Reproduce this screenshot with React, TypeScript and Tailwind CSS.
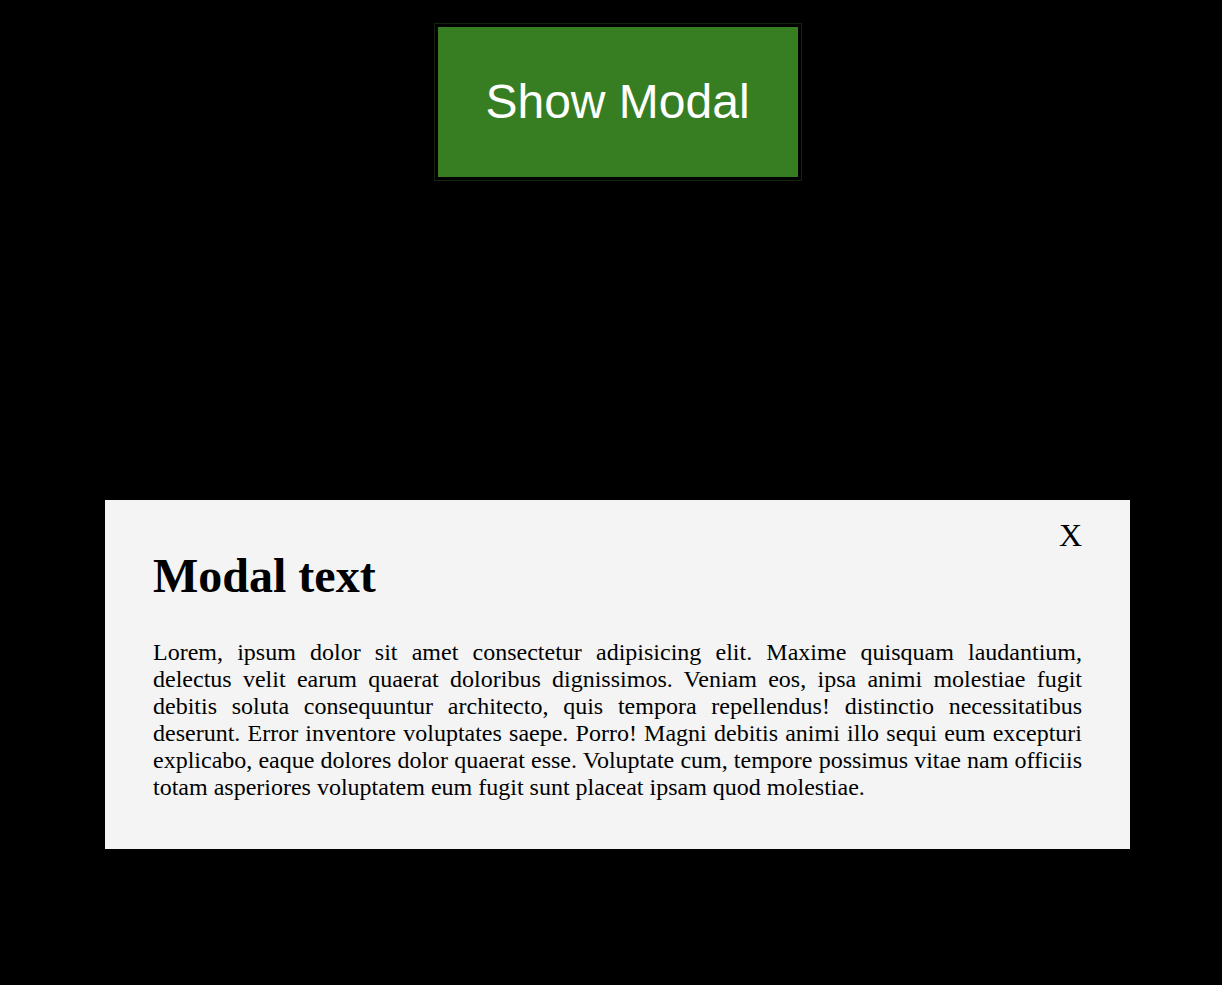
export default function App() {
  return (
    <div className="min-h-[985px] w-full bg-black flex flex-col items-center pl-[13px] pt-[24px]">
      <button className="w-[366px] h-[156px] bg-[#377e22] border-[3px] border-black outline outline-1 outline-[#13230e] text-white text-[48px] leading-none" style={{ fontFamily: '"Liberation Sans", Arial, sans-serif' }}>
        Show Modal
      </button>
      <div className="relative mt-[320px] w-[1025px] bg-[#f4f4f4] px-[48px] pt-[48px] pb-[48px] text-black" style={{ fontFamily: '"Liberation Serif", "Times New Roman", serif' }}>
        <button className="absolute right-[48px] top-[17px] text-[32px] leading-[37px]">X</button>
        <h2 className="text-[48px] font-bold leading-[55px] m-0">Modal text</h2>
        <p className="mt-[36px] text-[24px] leading-[27px] text-justify">
          Lorem, ipsum dolor sit amet consectetur adipisicing elit. Maxime quisquam laudantium, delectus velit earum quaerat doloribus dignissimos. Veniam eos, ipsa animi molestiae fugit debitis soluta consequuntur architecto, quis tempora repellendus! distinctio necessitatibus deserunt. Error inventore voluptates saepe. Porro! Magni debitis animi illo sequi eum excepturi explicabo, eaque dolores dolor quaerat esse. Voluptate cum, tempore possimus vitae nam officiis totam asperiores voluptatem eum fugit sunt placeat ipsam quod molestiae.
        </p>
      </div>
    </div>
  );
}
